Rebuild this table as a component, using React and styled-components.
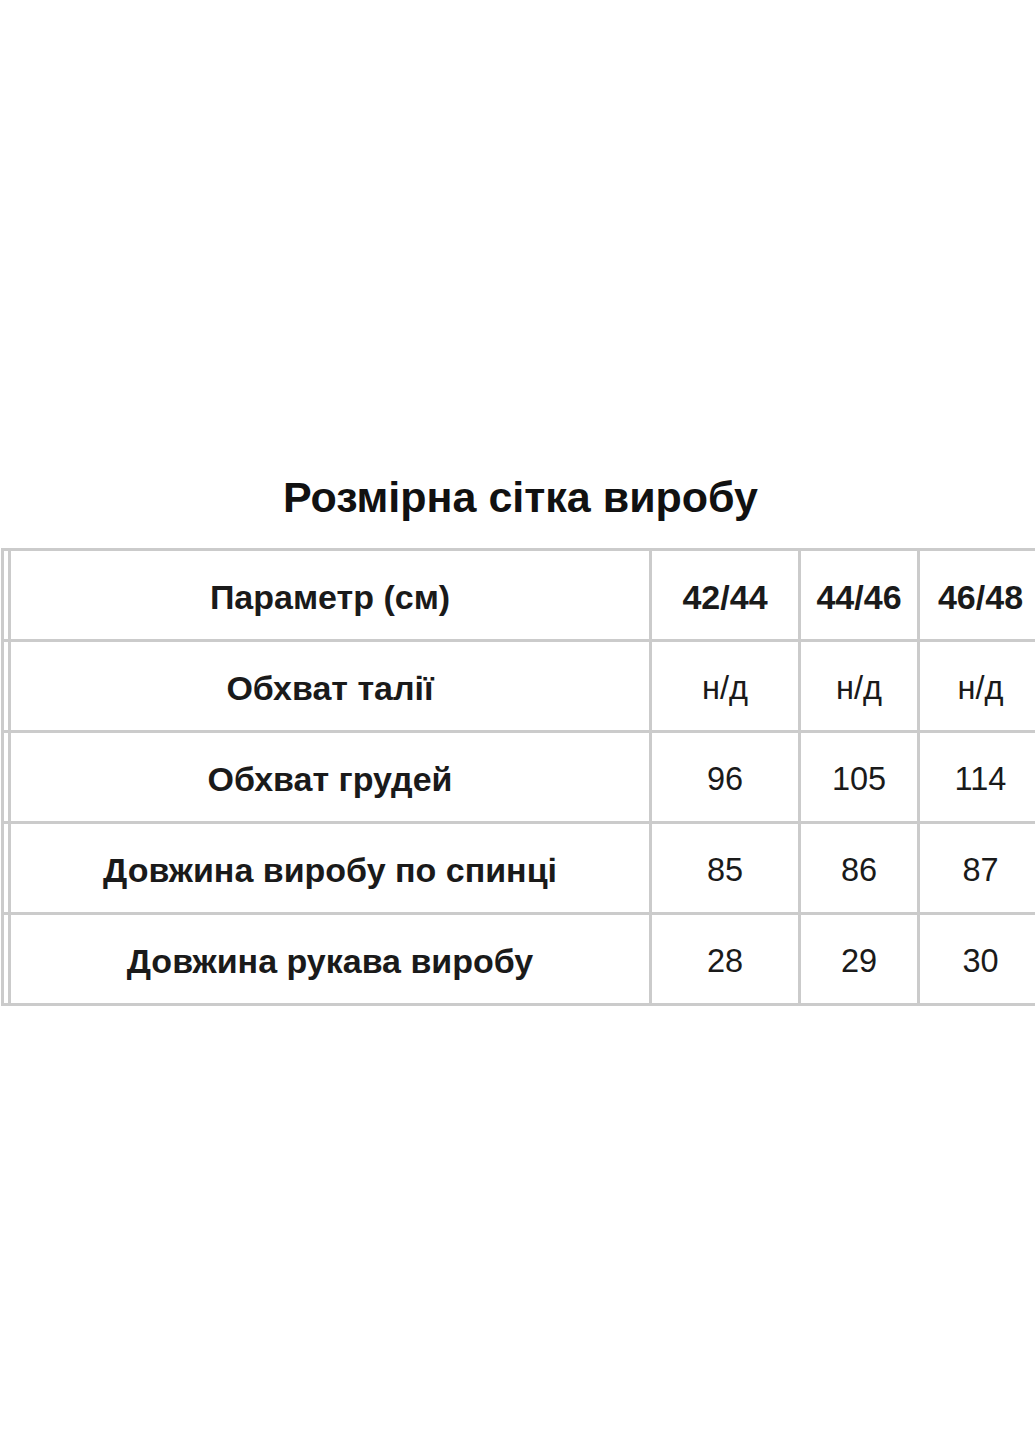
import React from "react";
import styled, { createGlobalStyle } from "styled-components";

const GlobalStyle = createGlobalStyle`
    html, body { margin: 0; padding: 0; background: #fff; }
    body { font-family: "Liberation Sans", Arial, sans-serif; color: #1a1a1a; }
`

const Page = styled.div`
    width: 1035px; height: 1440px; overflow: hidden;
    display: flex; flex-direction: column; align-items: center;
    padding-top: 470px; box-sizing: border-box;
`

const Title = styled.h1`
    margin: 0 0 24px 0;
    font-size: 43px; font-weight: bold; line-height: 54px;
    color: #111;
    transform: translateX(3px);
`

const TableWrap = styled.div`
    width: 100%; overflow: hidden;
`

const Table = styled.table`
    border-collapse: collapse;
    table-layout: fixed;
    width: 1040px;
    margin-left: 1px;
`

const Cell = styled.td`
    border: 3px solid #cbcbcb;
    height: 83px; padding: 5px 0 0 0;
    text-align: center; vertical-align: middle;
    font-size: ${props => props.bold ? 34 : 32.5}px;
    font-weight: ${props => props.bold ? 'bold' : 'normal'};
    color: #1a1a1a;
    white-space: nowrap;
`

const sizes = ["42/44", "44/46", "46/48"]

const rows = [
    ["Обхват талії", "н/д", "н/д", "н/д"],
    ["Обхват грудей", "96", "105", "114"],
    ["Довжина виробу по спинці", "85", "86", "87"],
    ["Довжина рукава виробу", "28", "29", "30"],
]

function App() {
    return (
        <Page>
            <GlobalStyle />
            <Title>Розмірна сітка виробу</Title>
            <TableWrap>
                <Table>
                    <colgroup>
                        <col style={{ width: 7 }} />
                        <col style={{ width: 641 }} />
                        <col style={{ width: 149 }} />
                        <col style={{ width: 119 }} />
                        <col style={{ width: 124 }} />
                    </colgroup>
                    <tbody>
                        <tr>
                            <Cell />
                            <Cell bold>Параметр (см)</Cell>
                            {sizes.map(s => <Cell bold key={s}>{s}</Cell>)}
                        </tr>
                        {rows.map(r => (
                            <tr key={r[0]}>
                                <Cell />
                                <Cell bold>{r[0]}</Cell>
                                <Cell>{r[1]}</Cell>
                                <Cell>{r[2]}</Cell>
                                <Cell>{r[3]}</Cell>
                            </tr>
                        ))}
                    </tbody>
                </Table>
            </TableWrap>
        </Page>
    )
}

export default App
